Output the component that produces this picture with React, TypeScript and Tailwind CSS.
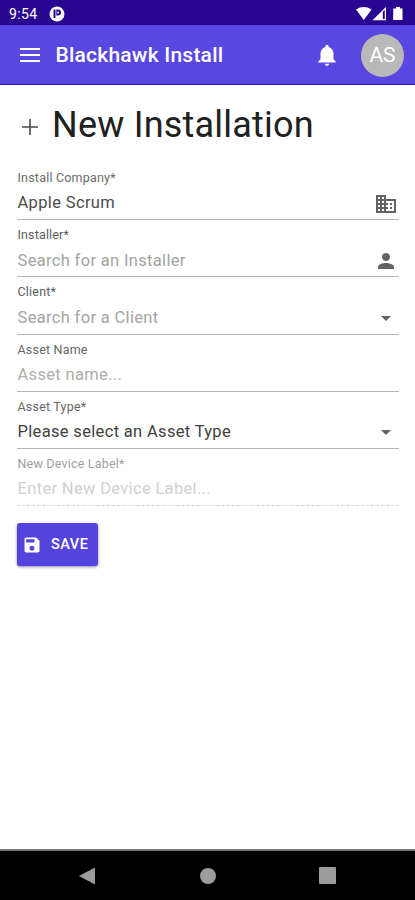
import React from 'react';

type Kind = 'company' | 'person' | 'arrow' | 'none';

const iconPaths: Record<Kind, string> = {
  company:
    'M12 7V3H2v18h20V7H12zM6 19H4v-2h2v2zm0-4H4v-2h2v2zm0-4H4V9h2v2zm0-4H4V5h2v2zm4 12H8v-2h2v2zm0-4H8v-2h2v2zm0-4H8V9h2v2zm0-4H8V5h2v2zm10 12h-8v-2h2v-2h-2v-2h2v-2h-2V9h8v10zm-2-8h-2v2h2v-2zm0 4h-2v2h2v-2z',
  person:
    'M12 12c2.21 0 4-1.79 4-4s-1.79-4-4-4-4 1.79-4 4 1.79 4 4 4zm0 2c-2.67 0-8 1.34-8 4v2h16v-2c0-2.66-5.33-4-8-4z',
  arrow: 'M7 10l5 5 5-5z',
  none: '',
};

interface FieldProps {
  label: string;
  value: string;
  icon?: Kind;
  labelClass: string;
  valueClass: string;
  disabled?: boolean;
}

function Field({ label, value, icon = 'none', labelClass, valueClass, disabled }: FieldProps) {
  return (
    <div
      className={`flex h-[57.2px] items-end justify-between border-b ${
        disabled ? 'border-dashed border-[#d0d0d0]' : 'border-[#b5b5b5]'
      }`}
    >
      <div className="flex h-full flex-col pl-[0.5px] whitespace-nowrap">
        <div className={`mt-[7px] h-4 text-[12.5px] leading-4 ${labelClass}`}>{label}</div>
        <div className={`mt-[5.400px] h-6 text-[16.5px] leading-6 ${valueClass}`}>{value}</div>
      </div>
      {icon !== 'none' && (
        <svg viewBox="0 0 24 24" className="mr-px mb-[3.500px] size-6 fill-[#636363]">
          <path d={iconPaths[icon]} />
        </svg>
      )}
    </div>
  );
}

export default function App() {
  return (
    <div className="flex h-[900px] w-[415px] flex-col overflow-hidden bg-white font-[Roboto,sans-serif]">
      <div className="flex h-[25px] shrink-0 items-center bg-[#290691] pt-[2px] pr-3 pl-[9px] text-white">
        <span className="w-10 text-[14px] leading-4 tracking-[0.35px]">9:54</span>
        <svg viewBox="0 0 16 16" className="size-4">
          <circle cx="8" cy="8" r="7.5" fill="white" />
          <path d="M4.500 3.500h2V12h-2zM7.300 3.500h1.700a3 3 0 0 1 0 6H7.300z" fill="#290691" />
          <path d="M8.300 5.500h.7a1 1 0 0 1 0 2h-.7z" fill="white" />
        </svg>
        <svg viewBox="0 0 48 16" className="ml-auto h-4 w-12 fill-white">
          <path d="M1 3.400Q8.800-1.200 16.600 3.400L8.800 14z" />
          <path fillRule="evenodd" d="M17.500 14.200L31 1v13.200zM27.800 5.800v7.200h2V3.900z" />
          <path d="M38.200 2.500H41V1h4v1.500h2.500V14h-9.300z" />
        </svg>
      </div>
      <header className="flex h-[60px] shrink-0 items-center border-b border-[#3514b5] bg-[#5847e0] pr-[11px] pl-5 text-white">
        <svg viewBox="0 0 20 14" className="mt-px h-[14px] w-5 fill-white">
          <path d="M0 0h20v2H0zM0 6h20v2H0zM0 12h20v2H0z" />
        </svg>
        <h1 className="mt-px ml-[15.500px] text-[21px] leading-7 font-medium tracking-[0.22px] whitespace-nowrap">
          Blackhawk Install
        </h1>
        <svg viewBox="0 0 24 24" className="mt-px ml-auto size-[26px] fill-white">
          <path d="M12 22c1.100 0 2-.9 2-2h-4c0 1.100.89 2 2 2zm6-6v-5c0-3.070-1.640-5.640-4.500-6.320V4c0-.83-.67-1.500-1.500-1.500s-1.500.67-1.500 1.500v.68C7.630 5.360 6 7.920 6 11v5l-2 2v1h16v-1l-2-2z" />
        </svg>
        <div className="mt-px ml-[21px] flex size-[43px] items-center justify-center rounded-full bg-[#b9b9b9] text-[21px] leading-6">
          AS
        </div>
      </header>
      <main className="flex flex-1 flex-col pr-4 pl-[17px]">
        <div className="flex h-[78px] items-center text-[#202020]">
          <svg viewBox="0 0 16 16" className="ml-[5px] mt-[5px] size-4 fill-[#4a4a4a]">
            <path d="M7.200 0h1.600v7.200H16v1.600H8.800V16H7.200V8.800H0V7.200h7.200z" />
          </svg>
          <h2 className="mt-px ml-[14px] text-[36px] leading-[44px] font-normal tracking-[0.22px] whitespace-nowrap">
            New Installation
          </h2>
        </div>
        <Field label="Install Company*" value="Apple Scrum" icon="company" labelClass="text-[#6b6b6b] tracking-[0.2px]" valueClass="text-[#4c4c4c] tracking-[0.35px]" />
        <Field label="Installer*" value="Search for an Installer" icon="person" labelClass="text-[#5d5d5d] tracking-[0.15px]" valueClass="text-[#a3a3a3] tracking-[0.33px]" />
        <Field label="Client*" value="Search for a Client" icon="arrow" labelClass="text-[#5d5d5d] tracking-[0.2px]" valueClass="text-[#a3a3a3] tracking-[0.33px]" />
        <Field label="Asset Name" value="Asset name..." labelClass="text-[#666666] tracking-[0.2px]" valueClass="text-[#adadad] tracking-[0.33px]" />
        <Field label="Asset Type*" value="Please select an Asset Type" icon="arrow" labelClass="text-[#666666] tracking-[0.2px]" valueClass="text-[#404040] tracking-[0.33px]" />
        <Field label="New Device Label*" value="Enter New Device Label..." disabled labelClass="text-[#a0a0a0] tracking-[0.2px]" valueClass="text-[#d0d0d0] tracking-[0.33px]" />
        <button className="mt-[17px] flex h-[43px] w-[80.500px] items-center rounded-[3px] bg-[#5543dd] pl-[5px] text-white shadow-[0_1px_3px_rgba(30,15,100,0.5)]">
          <svg viewBox="0 0 24 24" className="size-5 fill-white">
            <path d="M17 3H5c-1.110 0-2 .9-2 2v14c0 1.100.89 2 2 2h14c1.100 0 2-.9 2-2V7l-4-4zm-5 16c-1.660 0-3-1.340-3-3s1.340-3 3-3 3 1.340 3 3-1.340 3-3 3zm3-10H5V5h10v4z" />
          </svg>
          <span className="ml-[9px] text-[14.500px] leading-5 font-medium tracking-[0.5px]">SAVE</span>
        </button>
      </main>
      <footer className="flex h-[51px] shrink-0 items-center border-t-2 border-[#777777] bg-black pl-[79px]">
        <svg viewBox="0 0 17 18" className="h-[18px] w-[17px] fill-[#9c9c9c]">
          <path d="M0 9L16 .5v17z" />
        </svg>
        <div className="ml-[104px] size-4 rounded-full bg-[#9c9c9c]" />
        <div className="ml-[103px] size-[17px] rounded-[1px] bg-[#9c9c9c]" />
      </footer>
    </div>
  );
}
